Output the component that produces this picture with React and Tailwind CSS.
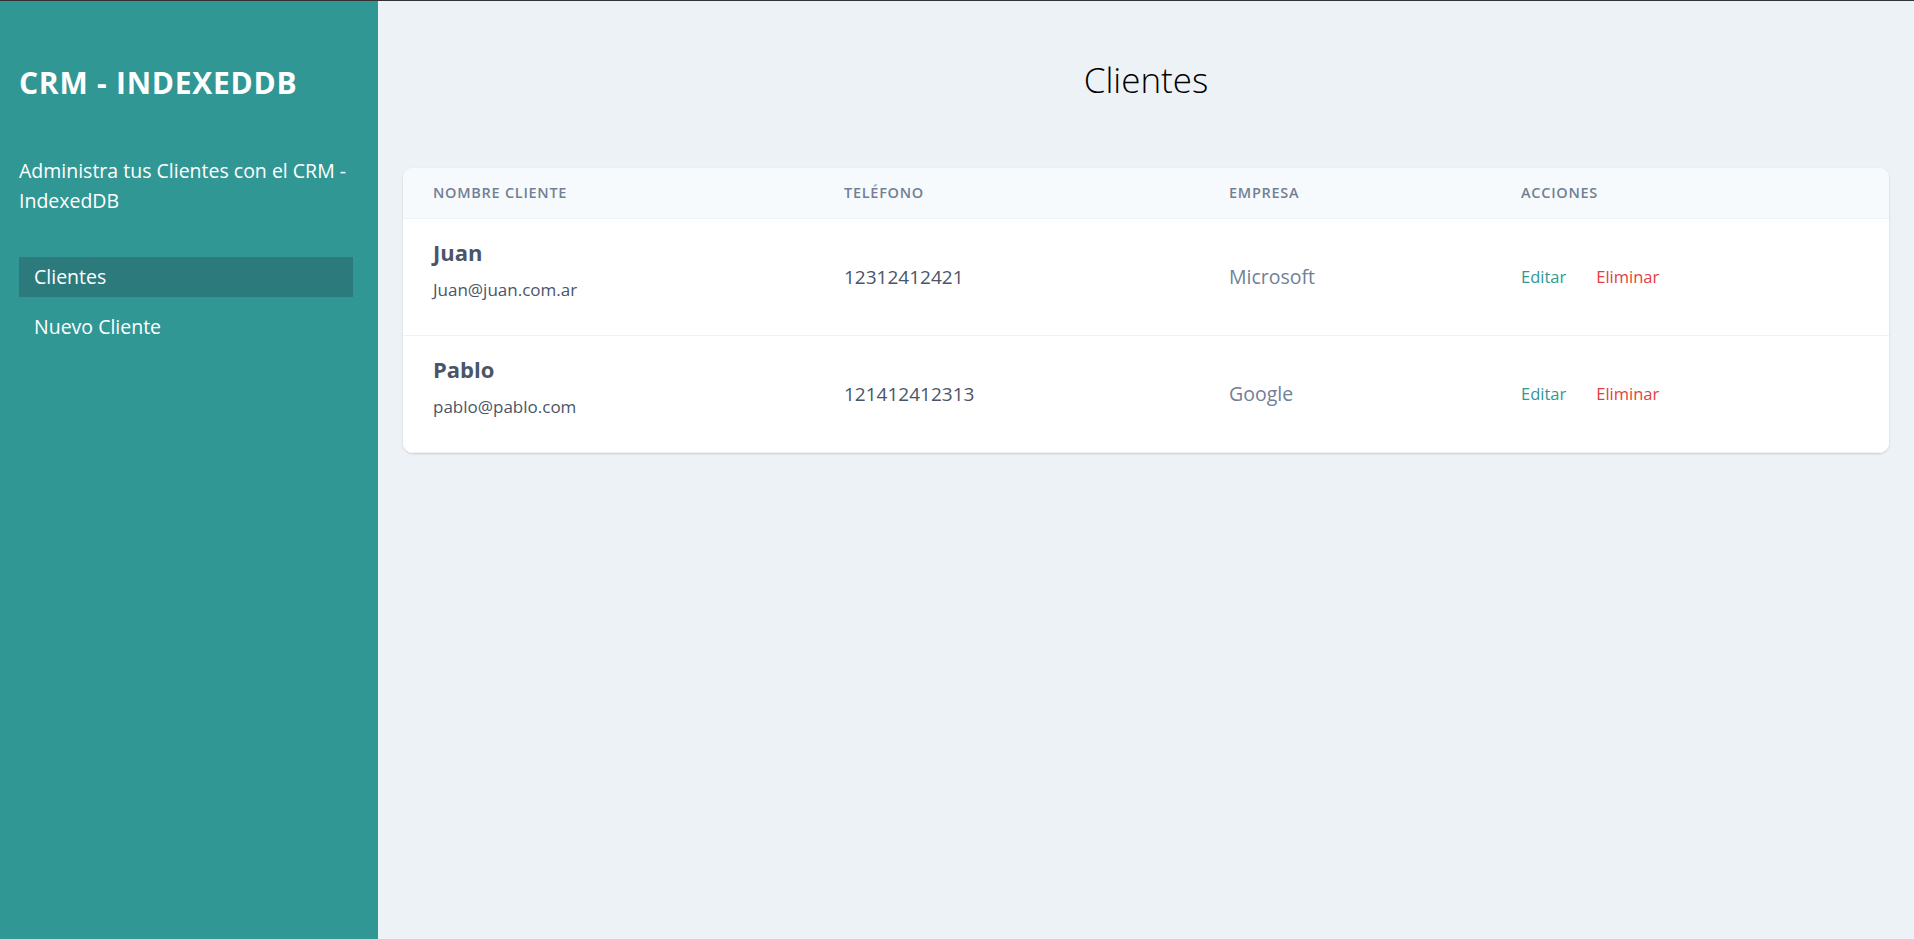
import React from "react";

const clientes = [
  { nombre: "Juan", email: "Juan@juan.com.ar", telefono: "12312412421", empresa: "Microsoft" },
  { nombre: "Pablo", email: "pablo@pablo.com", telefono: "121412412313", empresa: "Google" },
];

function Row({ c }) {
  return (
    <div className="grid grid-cols-[411px_385px_292px_1fr] border-b border-[#edf2f7] bg-white">
      <div className="px-[30px] py-[20px] flex flex-col">
        <p className="text-[22px] leading-[26px] font-bold text-[#4a5568]">{c.nombre}</p>
        <p className="text-[17px] leading-[50px] text-[#4a5568]">{c.email}</p>
      </div>
      <div className="px-[30px] flex items-center">
        <p className="text-[19px] leading-[30px] text-[#4a5568]">{c.telefono}</p>
      </div>
      <div className="px-[30px] flex items-center">
        <p className="text-[19.5px] leading-[30px] text-[#718096]">{c.empresa}</p>
      </div>
      <div className="px-[30px] flex items-center gap-[30px] text-[16.5px] leading-[26px]">
        <a className="text-[#319795]">Editar</a>
        <a className="text-[#e53e3e]">Eliminar</a>
      </div>
    </div>
  );
}

export default function App() {
  return (
    <div className="min-h-screen flex border-t border-[#333333] font-['Open_Sans',sans-serif]">
      <aside className="w-[378px] shrink-0 bg-[#319795] pl-[19px] pr-[25px]">
        <h1 className="mt-[67px] text-[30px] leading-[30px] font-bold tracking-wide text-white">
          CRM - INDEXEDDB
        </h1>
        <p className="mt-[58px] text-[19.5px] leading-[30px] text-white">
          Administra tus Clientes con el CRM - IndexedDB
        </p>
        <nav className="mt-[41px] flex flex-col gap-[10px]">
          <a className="block h-[40px] leading-[40px] px-[15px] bg-[#2c7a7b] text-[19.5px] text-white">
            Clientes
          </a>
          <a className="block h-[40px] leading-[40px] px-[15px] text-[19.5px] text-white">
            Nuevo Cliente
          </a>
        </nav>
      </aside>
      <main className="flex-1 bg-[#edf2f7] px-[25px]">
        <h2 className="mt-[56px] text-center text-[35px] leading-[45px] font-light text-black">
          Clientes
        </h2>
        <div className="mt-[66px] rounded-[10px] overflow-hidden bg-white shadow-[0_1px_3px_0_rgba(0,0,0,0.1),0_1px_2px_0_rgba(0,0,0,0.06)]">
          <div className="grid grid-cols-[411px_385px_292px_1fr] h-[51px] bg-[#f7fafc] border-b border-[#edf2f7] text-[14.5px] leading-[50px] font-semibold tracking-wider uppercase text-[#718096]">
            <div className="px-[30px]">Nombre Cliente</div>
            <div className="px-[30px]">Teléfono</div>
            <div className="px-[30px]">Empresa</div>
            <div className="px-[30px]">Acciones</div>
          </div>
          {clientes.map((c) => (
            <Row key={c.nombre} c={c} />
          ))}
        </div>
      </main>
    </div>
  );
}
